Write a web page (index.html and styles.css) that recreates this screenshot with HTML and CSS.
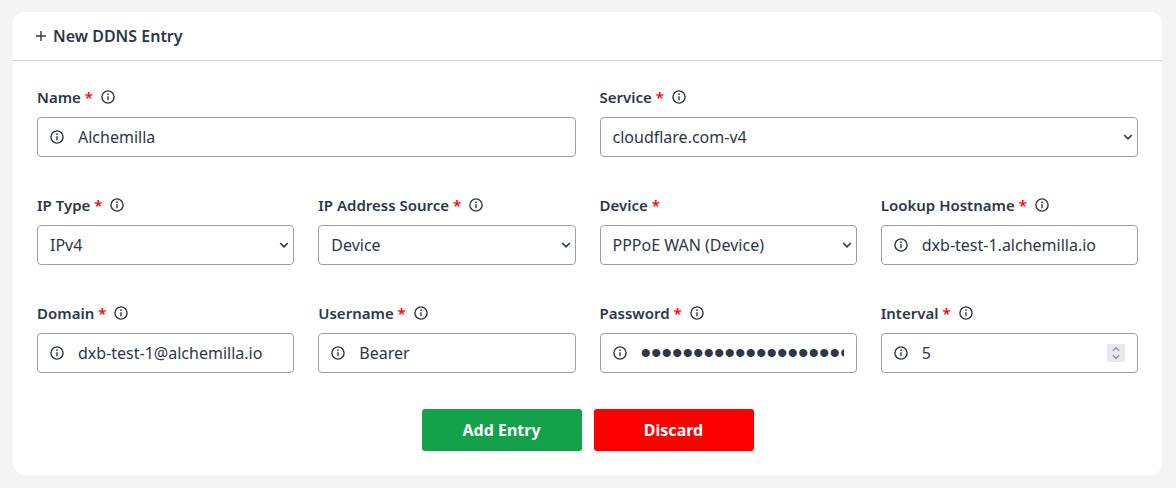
FILE: index.html
```html
<!DOCTYPE html>
<html lang="en">
<head>
    <meta charset="UTF-8">
    <meta name="viewport" content="width=device-width, initial-scale=1.0">
    <title>New DDNS Entry</title>
    <link rel="stylesheet" href="styles.css">
</head>
<body>
    <svg class="sprite" aria-hidden="true">
        <symbol id="info" viewBox="0 0 14 14">
            <circle cx="7" cy="7" r="6.1" fill="none" stroke="currentColor" stroke-width="1.4"/>
            <path d="M7 6.2v4.1" fill="none" stroke="currentColor" stroke-width="1.4"/>
            <circle cx="7" cy="4.2" r=".85" fill="currentColor"/>
        </symbol>
        <symbol id="chevron" viewBox="0 0 10 6">
            <path d="M1.2 1l3.8 3.8L8.8 1" fill="none" stroke="currentColor" stroke-width="1.6"/>
        </symbol>
    </svg>
    <form class="card">
        <h2 class="card-header">
            <svg class="plus" viewBox="0 0 10 10"><path d="M5 0v10M0 5h10" stroke="currentColor" stroke-width="1.4"/></svg>
            New DDNS Entry
        </h2>
        <div class="card-body">
            <div class="fields">
                <div class="form-group wide">
                    <div class="label"><label for="name">Name <span class="required">*</span></label><svg class="info"><use href="#info"/></svg></div>
                    <div class="control">
                        <svg class="info"><use href="#info"/></svg>
                        <input type="text" id="name" name="name" value="Alchemilla" required>
                    </div>
                </div>
                <div class="form-group wide">
                    <div class="label"><label for="service">Service <span class="required">*</span></label><svg class="info"><use href="#info"/></svg></div>
                    <div class="select">
                        <select id="service" name="service"><option>cloudflare.com-v4</option></select>
                        <svg class="chevron"><use href="#chevron"/></svg>
                    </div>
                </div>
                <div class="form-group">
                    <div class="label"><label for="ipType">IP Type <span class="required">*</span></label><svg class="info"><use href="#info"/></svg></div>
                    <div class="select">
                        <select id="ipType" name="ipType"><option>IPv4</option><option>IPv6</option></select>
                        <svg class="chevron"><use href="#chevron"/></svg>
                    </div>
                </div>
                <div class="form-group">
                    <div class="label"><label for="ipSource">IP Address Source <span class="required">*</span></label><svg class="info"><use href="#info"/></svg></div>
                    <div class="select">
                        <select id="ipSource" name="ipSource"><option>Device</option></select>
                        <svg class="chevron"><use href="#chevron"/></svg>
                    </div>
                </div>
                <div class="form-group">
                    <div class="label"><label for="device">Device <span class="required">*</span></label></div>
                    <div class="select">
                        <select id="device" name="device"><option>PPPoE WAN (Device)</option></select>
                        <svg class="chevron"><use href="#chevron"/></svg>
                    </div>
                </div>
                <div class="form-group">
                    <div class="label"><label for="hostname">Lookup Hostname <span class="required">*</span></label><svg class="info"><use href="#info"/></svg></div>
                    <div class="control">
                        <svg class="info"><use href="#info"/></svg>
                        <input type="text" id="hostname" name="hostname" value="dxb-test-1.alchemilla.io" required>
                    </div>
                </div>
                <div class="form-group">
                    <div class="label"><label for="domain">Domain <span class="required">*</span></label><svg class="info"><use href="#info"/></svg></div>
                    <div class="control">
                        <svg class="info"><use href="#info"/></svg>
                        <input type="text" id="domain" name="domain" value="dxb-test-1@alchemilla.io" required>
                    </div>
                </div>
                <div class="form-group">
                    <div class="label"><label for="username">Username <span class="required">*</span></label><svg class="info"><use href="#info"/></svg></div>
                    <div class="control">
                        <svg class="info"><use href="#info"/></svg>
                        <input type="text" id="username" name="username" value="Bearer" required>
                    </div>
                </div>
                <div class="form-group">
                    <div class="label"><label for="password">Password <span class="required">*</span></label><svg class="info"><use href="#info"/></svg></div>
                    <div class="control">
                        <svg class="info"><use href="#info"/></svg>
                        <input type="password" id="password" name="password" value="0123456789abcdef0123456789abcdef" required>
                    </div>
                </div>
                <div class="form-group">
                    <div class="label"><label for="interval">Interval <span class="required">*</span></label><svg class="info"><use href="#info"/></svg></div>
                    <div class="control">
                        <svg class="info"><use href="#info"/></svg>
                        <input type="number" id="interval" name="interval" value="5" required>
                        <svg class="spinner" viewBox="0 0 18 18"><path d="M5.8 6.8L9 3.8l3.2 3M5.8 11.2l3.2 3 3.2-3" fill="none" stroke="currentColor" stroke-width="1.5"/></svg>
                    </div>
                </div>
            </div>
            <div class="buttons">
                <button type="submit" class="add">Add Entry</button>
                <button type="reset" class="discard">Discard</button>
            </div>
        </div>
    </form>
</body>
</html>
```
FILE: styles.css
```css
body {
    margin: 0;
    padding: 12px 14px 12px 13px;
    background-color: #f4f4f4;
    color: #2d3748;
    font-family: "Noto Sans", sans-serif;
    font-size: 16px;
    line-height: 24px;
}
.sprite {
    display: none;
}
.card {
    background-color: #fff;
    border-radius: 12px;
}
.card-header {
    display: flex;
    align-items: center;
    gap: 7px;
    margin: 0;
    padding: 12px 23px;
    border-bottom: 1px solid #d1d5db;
    font-size: 16px;
    font-weight: 600;
}
.plus {
    width: 10px;
    height: 10px;
}
.card-body {
    padding: 24px;
}
.fields {
    display: grid;
    grid-template-columns: repeat(4, minmax(0, 1fr));
    gap: 36px 24px;
}
.wide {
    grid-column: span 2;
}
.label {
    display: flex;
    align-items: center;
    gap: 8px;
    margin-bottom: 8px;
    font-size: 15px;
    font-weight: 600;
}
.required {
    color: #f00;
}
.info {
    flex: none;
    width: 14px;
    height: 14px;
}
.control,
.select select {
    box-sizing: border-box;
    width: 100%;
    height: 40px;
    padding: 0 12px;
    border: 1px solid #9a9fb0;
    border-radius: 4px;
    background-color: #fff;
}
.control {
    display: flex;
    align-items: center;
    gap: 14px;
}
.control input {
    flex: 1;
    min-width: 0;
    padding: 0;
    border: none;
    outline: none;
    background: none;
    color: inherit;
    font: inherit;
}
.control input[type="password"] {
    font-family: "Liberation Sans", sans-serif;
    font-size: 30px;
}
.control input[type="number"] {
    appearance: textfield;
}
.spinner {
    width: 18px;
    height: 18px;
    background-color: #e9e9ed;
    color: #9595a1;
}
.select {
    position: relative;
}
.select select {
    display: block;
    appearance: none;
    color: inherit;
    font: inherit;
}
.chevron {
    position: absolute;
    top: 17px;
    right: 5px;
    width: 10px;
    height: 6px;
    pointer-events: none;
}
.buttons {
    display: flex;
    justify-content: center;
    gap: 12px;
    margin-top: 36px;
}
.buttons button {
    width: 160px;
    height: 42px;
    border: none;
    border-radius: 3px;
    color: #fff;
    font: inherit;
    font-weight: 700;
    cursor: pointer;
}
.add {
    background-color: #13a24a;
}
.discard {
    background-color: #f00;
}
```
